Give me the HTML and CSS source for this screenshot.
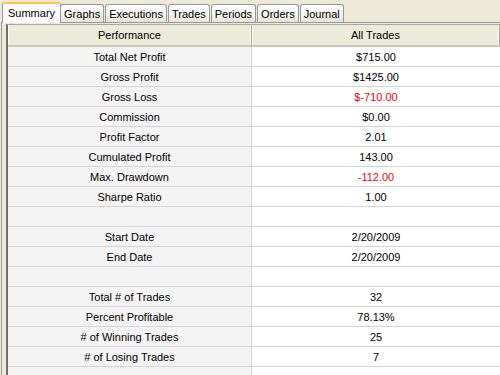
FILE: index.html
```html
<!DOCTYPE html>
<html lang="en">
<head>
  <meta charset="UTF-8">
  <title>Strategy Performance</title>
  <link rel="stylesheet" href="styles.css">
</head>
<body>
  <!-- Tabs -->
  <div class="tabs">
    <div class="tab active">Summary</div>
    <div class="tab">Graphs</div>
    <div class="tab">Executions</div>
    <div class="tab">Trades</div>
    <div class="tab">Periods</div>
    <div class="tab">Orders</div>
    <div class="tab">Journal</div>
  </div>

  <!-- Summary grid -->
  <div class="panel">
    <div class="grid">
      <div class="head">Performance</div>
      <div class="head">All Trades</div>

      <div class="name">Total Net Profit</div><div class="val">$715.00</div>
      <div class="name">Gross Profit</div><div class="val">$1425.00</div>
      <div class="name">Gross Loss</div><div class="val neg">$-710.00</div>
      <div class="name">Commission</div><div class="val">$0.00</div>
      <div class="name">Profit Factor</div><div class="val">2.01</div>
      <div class="name">Cumulated Profit</div><div class="val">143.00</div>
      <div class="name">Max. Drawdown</div><div class="val neg">-112.00</div>
      <div class="name">Sharpe Ratio</div><div class="val">1.00</div>
      <div class="name"></div><div class="val"></div>
      <div class="name">Start Date</div><div class="val">2/20/2009</div>
      <div class="name">End Date</div><div class="val">2/20/2009</div>
      <div class="name"></div><div class="val"></div>
      <div class="name">Total # of Trades</div><div class="val">32</div>
      <div class="name">Percent Profitable</div><div class="val">78.13%</div>
      <div class="name"># of Winning Trades</div><div class="val">25</div>
      <div class="name"># of Losing Trades</div><div class="val">7</div>
      <div class="name"></div><div class="val"></div>
    </div>
  </div>
</body>
</html>
```

FILE: styles.css
```css
/* Base */
body {
  margin: 0;
  background: #ece9d8;
  font-family: "Liberation Sans", sans-serif;
  font-size: 11px;
  color: #000;
  overflow: hidden;
  height: 375px;
}

/* Tabs */
.tabs {
  display: flex;
  align-items: flex-end;
  height: 22px;
  padding-left: 4px;
}

.tab {
  height: 17px;
  line-height: 18px;
  padding: 0 3px;
  margin-right: 1px;
  border: 1px solid #919b9c;
  border-bottom: none;
  border-radius: 3px 3px 0 0;
  background: linear-gradient(to bottom, #ffffff, #f3f3ef 60%, #e4e3dc);
}

.tab.active {
  height: 19px;
  line-height: 19px;
  margin-left: -2px;
  margin-right: -1px;
  padding: 0 5px;
  background: #fcfcfe;
  border-top: 2px solid #ffc83c;
  position: relative;
  z-index: 2;
  margin-bottom: -1px;
}

/* Panel */
.panel {
  border-top: 1px solid #919b9c;
  border-left: 1px solid #919b9c;
  margin-left: 1px;
  padding: 1px 0 0 4px;
  height: 360px;
  overflow: hidden;
}

.grid {
  display: grid;
  grid-template-columns: 244px 1fr;
  border-left: 2px solid #716f64;
  border-top: 1px solid #aca899;
  box-shadow: inset 1px 0 0 #fff;
}

.head {
  height: 20px;
  line-height: 21px;
  text-align: center;
  background: #ebeadb;
  border-bottom: 2px solid #cbc7b8;
  border-right: 1px solid #aca899;
  box-shadow: inset 1px 0 0 #fff, inset -1px 0 0 #f8f7f0;
}

.name, .val {
  height: 19px;
  line-height: 20px;
  text-align: center;
  border-bottom: 1px solid #d4d4d4;
}

.name {
  background: #f4f4f4;
  border-right: 1px solid #d4d4d4;
}

.val {
  background: #fff;
}

.neg {
  color: #ff0000;
}
```
